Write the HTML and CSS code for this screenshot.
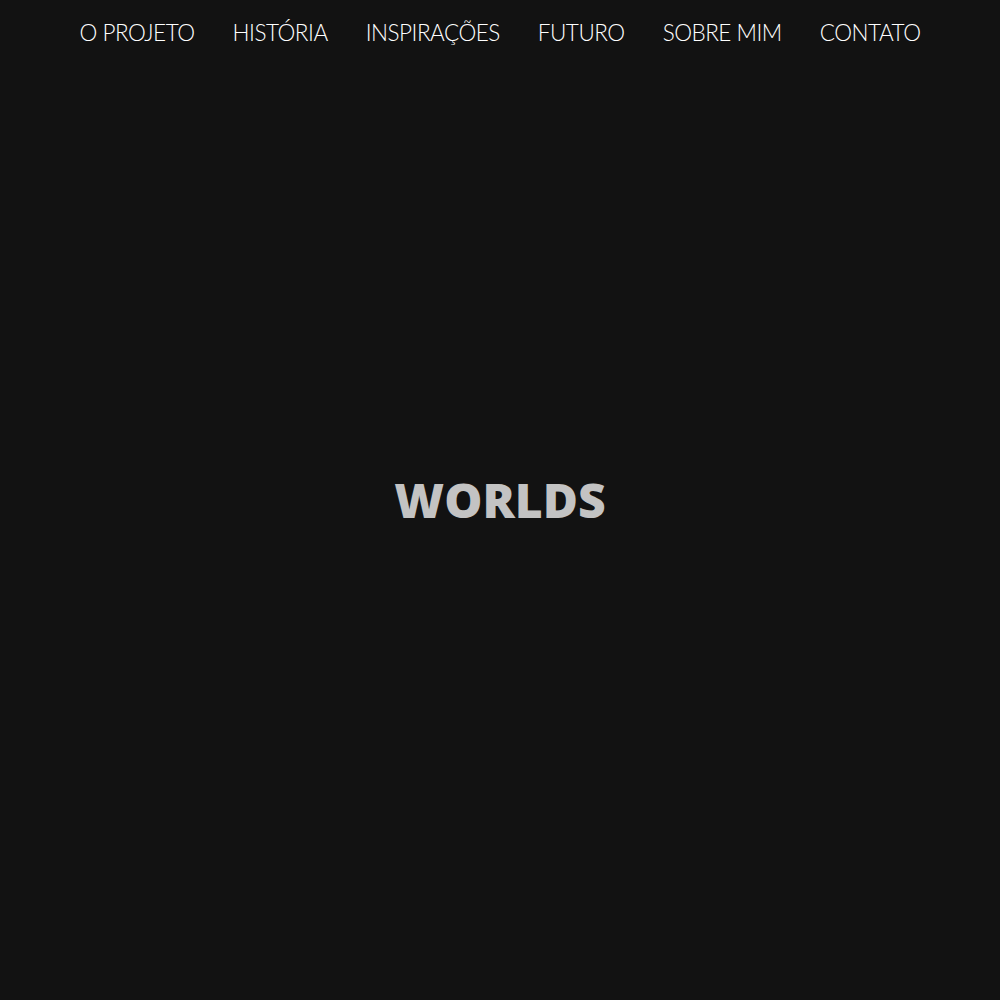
FILE: index.html
```html
<!DOCTYPE html>
<html lang="pt">
<head>
<meta charset="utf-8">
<title>Worlds</title>
<link rel="stylesheet" href="styles.css">
</head>
<body>
<header class="topbar">
  <nav class="nav">
    <a class="nav-link" href="#">O PROJETO</a>
    <a class="nav-link" href="#">HISTÓRIA</a>
    <a class="nav-link" href="#">INSPIRAÇÕES</a>
    <a class="nav-link" href="#">FUTURO</a>
    <a class="nav-link" href="#">SOBRE MIM</a>
    <a class="nav-link" href="#">CONTATO</a>
  </nav>
</header>
<main class="hero">
  <h1 class="hero-title">WORLDS</h1>
</main>
</body>
</html>
```
FILE: styles.css
```css
html, body {
  margin: 0;
  padding: 0;
  background: #121212;
  height: 100%;
}
body {
  position: relative;
  overflow: hidden;
}
.topbar {
  position: absolute;
  top: 0;
  left: 0;
  right: 0;
  display: flex;
  justify-content: center;
  padding-top: 18px;
}
.nav {
  display: flex;
  gap: 38px;
}
.nav-link {
  font-family: "Lato", sans-serif;
  font-weight: 300;
  font-size: 22.5px;
  letter-spacing: -0.5px;
  line-height: 30px;
  color: #ffffff;
  text-decoration: none;
}
.hero {
  height: 100vh;
  display: flex;
  align-items: center;
  justify-content: center;
}
.hero-title {
  margin: 0;
  font-family: "Open Sans", sans-serif;
  font-weight: 800;
  font-size: 48px;
  line-height: 1;
  color: #c3c3c3;
}
```
